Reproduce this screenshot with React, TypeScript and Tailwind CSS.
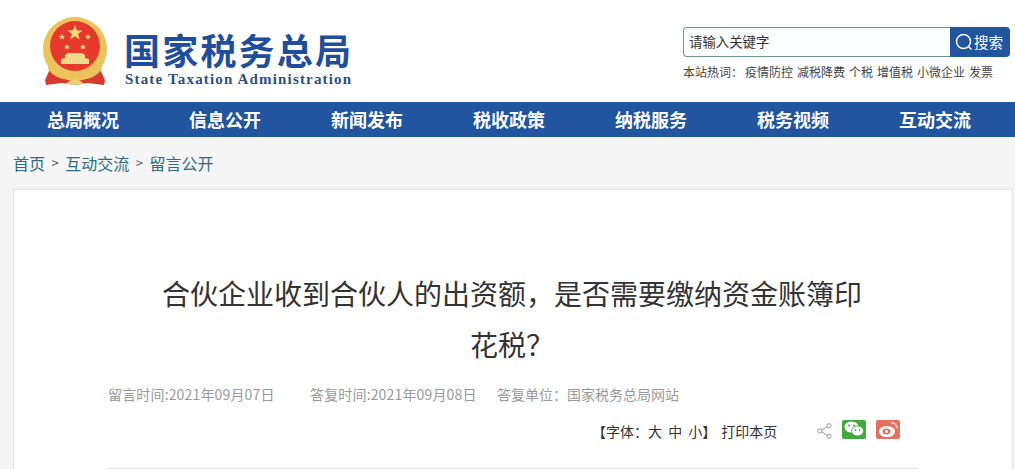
const navItems = ["总局概况", "信息公开", "新闻发布", "税收政策", "纳税服务", "税务视频", "互动交流"];
const hotWords = ["疫情防控", "减税降费", "个税", "增值税", "小微企业", "发票"];

const cjk = "font-['Noto_Sans_CJK_SC',sans-serif]";

const Star = ({ x, y, r }: { x: number; y: number; r: number }) => {
  const points = Array.from({ length: 10 }, (_, i) => {
    const a = (Math.PI / 5) * i - Math.PI / 2;
    const d = i % 2 === 0 ? r : r * 0.4;
    return `${x + d * Math.cos(a)},${y + d * Math.sin(a)}`;
  }).join(" ");
  return <polygon points={points} fill="#f6dc78" />;
};

const Emblem = () => (
  <svg width="66" height="68" viewBox="0 0 66 68">
    <path d="M9 50 L3 63 L4 68 L20 66 L33 68 L46 66 L62 68 L63 63 L57 50 Z" fill="#d8392b" />
    <circle cx="33" cy="32" r="32" fill="#ecc25a" />
    <circle cx="33" cy="29" r="25" fill="#e4392b" />
    <Star x={33} y={16} r={8} />
    <Star x={20} y={20} r={3.2} />
    <Star x={46} y={20} r={3.2} />
    <Star x={25} y={30} r={3.2} />
    <Star x={41} y={30} r={3.2} />
    <path d="M19 47 h28 v-5 l-4 -1 v-3 l-3 -2 h-14 l-3 2 v3 l-4 1 Z" fill="#f3d98a" />
    <path d="M7 46 C14 58 26 54 33 60 C40 54 52 58 59 46 L60 52 C51 65 40 60 33 66 C26 60 15 65 6 52 Z" fill="#edc35c" />
    <path d="M23 67 l10 -6 10 6 -10 1 Z" fill="#f1cf7a" />
  </svg>
);

const ShareIcon = () => (
  <svg width="15" height="16" viewBox="0 0 15 16" fill="none" stroke="#9a9a9a" strokeWidth="1">
    <circle cx="2.8" cy="8" r="2.1" />
    <circle cx="12" cy="2.8" r="2.1" />
    <circle cx="12" cy="13.2" r="2.1" />
    <path d="M4.7 7 L10.1 3.8 M4.7 9 L10.1 12.2" />
  </svg>
);

const WechatIcon = () => (
  <svg width="24" height="19" viewBox="0 0 24 19">
    <rect width="24" height="19" rx="2" fill="#43a83d" />
    <ellipse cx="9.5" cy="7" rx="7" ry="5.5" fill="#fff" />
    <ellipse cx="15.5" cy="11" rx="6" ry="5" fill="#fff" stroke="#43a83d" strokeWidth="0.8" />
    <circle cx="7" cy="5.5" r="1" fill="#43a83d" />
    <circle cx="12" cy="5.5" r="1" fill="#43a83d" />
    <circle cx="13.5" cy="10" r="0.9" fill="#43a83d" />
    <circle cx="17.5" cy="10" r="0.9" fill="#43a83d" />
  </svg>
);

const WeiboIcon = () => (
  <svg width="24" height="19" viewBox="0 0 24 19">
    <rect width="24" height="19" rx="2" fill="#e4705f" />
    <ellipse cx="11" cy="11.5" rx="8" ry="5.5" fill="#fff" />
    <ellipse cx="10.5" cy="11.5" rx="4" ry="3" fill="#e4705f" />
    <circle cx="10.5" cy="11.5" r="1.4" fill="#fff" />
    <path d="M15 2.5 a6 6 0 0 1 6 6" fill="none" stroke="#f6cfc8" strokeWidth="1.6" />
  </svg>
);

export default function App() {
  return (
    <div className={`h-[469px] w-[1015px] overflow-hidden bg-[#f5f5f5] ${cjk}`}>
      <header className="flex h-[102px] items-start justify-between bg-white">
        <div className="flex items-start pl-[42px] pt-[17px]">
          <Emblem />
          <div className="ml-[16px] pt-[11px]">
            <div className="text-[36px] leading-[42px] font-bold tracking-[2.2px] whitespace-nowrap text-[#1f4f9c]">国家税务总局</div>
            <div className="mt-[1px] ml-[1px] font-['Liberation_Serif',serif] text-[15px] leading-[16px] font-bold tracking-[1.17px] whitespace-nowrap text-[#2c4f80]">
              State Taxation Administration
            </div>
          </div>
        </div>
        <div className="w-[332px] pt-[27px]">
          <div className="flex h-[30px] w-[327px]">
            <div className="flex flex-1 items-center rounded-l-[4px] border border-r-0 border-[#6f8f9f] bg-[#fbfeff] pb-[1px] pl-[5px] text-[13.4px] text-[#333]">
              请输入关键字
            </div>
            <div className="flex w-[60px] items-center gap-[1px] rounded-r-[4px] bg-[#22559f] pl-[5px] text-[14.5px] text-white">
              <svg width="18" height="18" viewBox="0 0 18 18" fill="none" stroke="#fff" strokeWidth="1.5">
                <circle cx="8.5" cy="8.5" r="7" />
                <path d="M13.5 13.5 L16.5 16.5" />
              </svg>
              搜索
            </div>
          </div>
          <div className="mt-[7px] flex gap-[4px] text-[12px] leading-[16px] whitespace-nowrap text-[#444]">
            <span className="w-[58px]">本站热词：</span>
            {hotWords.map((word) => (
              <span key={word}>{word}</span>
            ))}
          </div>
        </div>
      </header>

      <nav className="flex h-[35px] items-center justify-between bg-[#22559f] pr-[44px] pl-[47px]">
        {navItems.map((item) => (
          <span key={item} className="text-[18px] font-bold whitespace-nowrap text-white">
            {item}
          </span>
        ))}
      </nav>

      <div className="flex h-[52px] items-center gap-[6.5px] pl-[13px] text-[16px] text-[#2e6b7c]">
        <span>首页</span>
        <span className="text-[13px] text-[#555]">&gt;</span>
        <span>互动交流</span>
        <span className="text-[13px] text-[#555]">&gt;</span>
        <span>留言公开</span>
      </div>

      <main className="mr-[2px] ml-[13px] h-[300px] border border-[#e4e4e4] bg-white">
        <div className="px-[94px] pt-[78px]">
          <h1 className="ml-[54px] w-[700px] text-center text-[28px] leading-[51px] font-normal text-[#333]">
            合伙企业收到合伙人的出资额，是否需要缴纳资金账簿印花税？
          </h1>
          <div className="mt-[15px] flex text-[14px] leading-[18px] whitespace-nowrap text-[#999]">
            <span className="w-[202px] tracking-[0.16px]">留言时间:2021年09月07日</span>
            <span className="w-[187px] tracking-[0.16px]">答复时间:2021年09月08日</span>
            <span>答复单位：国家税务总局网站</span>
          </div>
          <div className="mt-[18px] flex items-center pl-[484px] text-[14px] leading-[20px] whitespace-nowrap text-[#333]">
            <span className="[word-spacing:3px]">【字体：大 中 小】</span>
            <span className="ml-[5px]">打印本页</span>
            <span className="ml-[40px]"><ShareIcon /></span>
            <span className="ml-[10px] -translate-y-[2px]"><WechatIcon /></span>
            <span className="ml-[10px] -translate-y-[2px]"><WeiboIcon /></span>
          </div>
          <div className="mt-[27px] h-px w-[810px] bg-[#ddd]" />
        </div>
      </main>
    </div>
  );
}
